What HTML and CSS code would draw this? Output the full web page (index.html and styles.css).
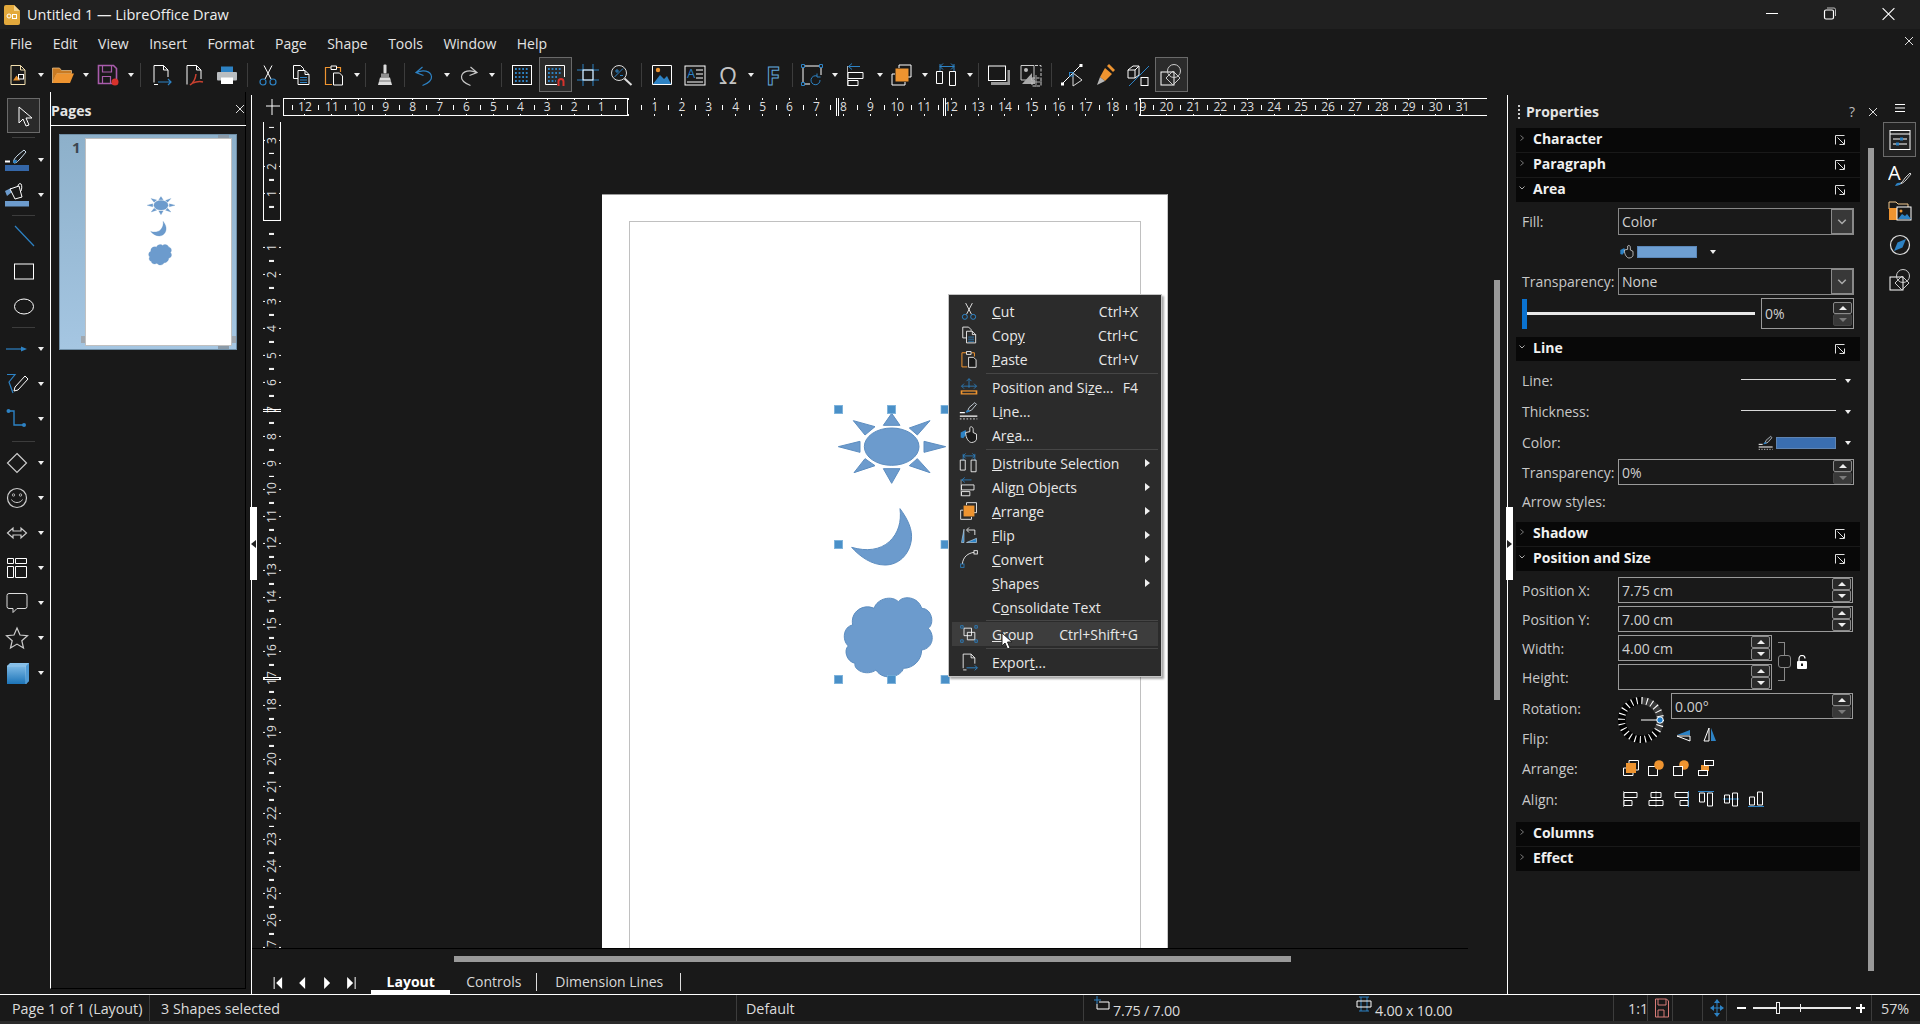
FILE: index.html
```html
<!DOCTYPE html>
<html lang="en">

	<head>
		<meta charset="UTF-8">
		<title>Untitled 1 — LibreOffice Draw</title>
		<link rel="stylesheet" href="styles.css">
	</head>

	<body>
		<svg class="defs" xmlns="http://www.w3.org/2000/svg">
			<defs>
				<linearGradient id="cubeblue" x1="0" y1="0" x2="0" y2="1">
					<stop offset="0" stop-color="#8cc4ec"/>
					<stop offset="1" stop-color="#1c74b8"/>
				</linearGradient>
			</defs>
			<!-- toolbar -->
			<symbol id="new" viewBox="0 0 24 24"><path d="M5 2.5h9.5l4.5 4.5v14.5H5zM14.5 2.5V7H19" fill="none" stroke="#f2dfae"/><path d="M7 17.5l3.5-5 3.5 5z" fill="#e8912d"/><rect x="12.5" y="11.5" width="5" height="4.5" fill="none" stroke="#fff"/></symbol>
			<symbol id="open" viewBox="0 0 24 24"><path d="M1.5 5h7l2 2.5h10v3H6L1.5 20z" fill="#c97a22" stroke="#f0c890" stroke-width=".7"/><path d="M5.5 10.5H23L19 20H1.5z" fill="#ee9430"/></symbol>
			<symbol id="save" viewBox="0 0 24 24"><path d="M2.5 2.5h15l3 3v15h-18z" fill="none" stroke="#a95cab" stroke-width="1.6"/><path d="M6.5 3v6h9V3M6.5 20.5v-7h8v7" fill="none" stroke="#a95cab" stroke-width="1.2"/><circle cx="19" cy="19" r="3.5" fill="#d8322c"/></symbol>
			<symbol id="export" viewBox="0 0 24 24"><path d="M5 19.5V2.5h9.5L19 7v7M14.5 2.5V7H19M5 21.5h4" fill="none" stroke="#fff"/><path d="M9 19h13M19 16l3 3-3 3" fill="none" stroke="#2d82c4" stroke-width="1.2"/></symbol>
			<symbol id="pdf" viewBox="0 0 24 24"><path d="M5 21.5V2.5h9.5L19 7v9M14.5 2.5V7H19" fill="none" stroke="#fff"/><path d="M14 11c-.5 5-3 9-6 11 3-3 9-4 13-3" fill="none" stroke="#c8402f" stroke-width="1.5"/></symbol>
			<symbol id="print" viewBox="0 0 24 24"><path d="M6 3.5h12V10H6z" fill="#2d82c4"/><rect x="2" y="9" width="20" height="8.5" rx="1" fill="#b9bdc0"/><path d="M6 14.5h12V21H6z" fill="#fff"/></symbol>
			<symbol id="cut" viewBox="0 0 24 24"><path d="M9 16L16 2.5M15 16L8 2.5" stroke="#fff" fill="none"/><circle cx="7" cy="19" r="3" fill="none" stroke="#2d82c4" stroke-width="1.2"/><circle cx="17" cy="19" r="3" fill="none" stroke="#2d82c4" stroke-width="1.2"/></symbol>
			<symbol id="copy" viewBox="0 0 24 24"><path d="M9 15.5H4.5v-13h7l3 3V7" fill="none" stroke="#fff"/><path d="M9 7.5h7l4 4v10H9zM16 7.5v4h4" fill="none" stroke="#fff"/><path d="M11 14.5h7M11 17h7M11 19.5h7" stroke="#2d82c4"/></symbol>
			<symbol id="paste" viewBox="0 0 24 24"><path d="M8.5 4.5h-5v17H10M15 4.5h3.5V9" fill="none" stroke="#ee9430" stroke-width="1.2"/><path d="M9 3h5.5v3.5H9z" fill="none" stroke="#fff"/><path d="M11.5 10h6l3 3v9h-9z" fill="#191919" stroke="#fff"/></symbol>
			<symbol id="clone" viewBox="0 0 24 24"><rect x="10.5" y="1.5" width="3" height="9" rx="1" fill="#ddd"/><path d="M8 10.5h8v4H8z" fill="#8e8e8e"/><path d="M7 14.5h10l2 7.5H5z" fill="#dcdcdc"/><path d="M6 18h12" stroke="#777"/></symbol>
			<symbol id="undo" viewBox="0 0 24 24"><path d="M10.5 4L4 9.5l7.5 3M4.5 9.5c6-3 14-2 15 4 .5 4-4 7-9 9" fill="none" stroke="#2d82c4" stroke-width="1.2"/></symbol>
			<symbol id="redo" viewBox="0 0 24 24"><path d="M13.5 4L20 9.5l-7.5 3M19.5 9.5c-6-3-14-2-15 4-.5 4 4 7 9 9" fill="none" stroke="#c8c8c8" stroke-width="1.2"/></symbol>
			<symbol id="grid" viewBox="0 0 24 24"><rect x="2.5" y="2.5" width="19" height="19" fill="none" stroke="#fff"/><path d="M5 6h14M5 10h14M5 14h14M5 18h14" stroke="#2d82c4" stroke-width="1.8" stroke-dasharray="1.8 1.8"/></symbol>
			<symbol id="snap" viewBox="0 0 24 24"><path d="M14 21.5H2.5v-19h19V14" fill="none" stroke="#fff"/><path d="M5 6h14M5 10h14M5 14h9M5 18h8" stroke="#2d82c4" stroke-width="1.8" stroke-dasharray="1.8 1.8"/><path d="M15.5 23v-4.5a2.5 2.5 0 0 1 5 0V23" fill="none" stroke="#d8322c" stroke-width="2"/></symbol>
			<symbol id="help" viewBox="0 0 24 24"><path d="M7 1v22M17 1v22M1 7h22M1 17h22" stroke="#2d82c4"/><rect x="7" y="7" width="10" height="10" fill="none" stroke="#fff"/></symbol>
			<symbol id="zoom" viewBox="0 0 24 24"><circle cx="10" cy="10" r="7.5" fill="none" stroke="#ddd"/><path d="M15.5 15.5L22.5 22" stroke="#ddd" stroke-width="2"/><path d="M5.5 14L14 5.5M6 8h4M8 6v4M11 12.5h3" stroke="#2d82c4"/></symbol>
			<symbol id="image" viewBox="0 0 24 24"><path d="M2.5 2.5h19v19h-19z" fill="none" stroke="#fff"/><path d="M3 21l7-9 4 4 3-3 4 8z" fill="#2d82c4"/><circle cx="8" cy="7" r="2.2" fill="#ee9430"/></symbol>
			<symbol id="transform" viewBox="0 0 24 24"><path d="M3 3h18v9M3 3v18h7" fill="none" stroke="#fff"/><path d="M20 17a4.5 4.5 0 1 1-3-4M17 10.5V14h3.5" fill="none" stroke="#2d82c4"/><path d="M1.5 1.5h3v3h-3zM19.5 1.5h3v3h-3zM1.5 19.5h3v3h-3z" fill="#191919" stroke="#2d82c4"/></symbol>
			<symbol id="align" viewBox="0 0 24 24"><path d="M2.5 3v20" stroke="#aaa"/><path d="M3 3.5h12M7 .5L3.5 3.5 7 6.5" fill="none" stroke="#2d82c4"/><path d="M3 9.5h15v6H3zM3 17.5h10v5H3z" fill="none" stroke="#fff"/></symbol>
			<symbol id="arrange" viewBox="0 0 24 24"><path d="M9 5V2h12v12h-3M15 19v3H2V11h3" fill="none" stroke="#fff"/><rect x="5.5" y="5.5" width="13" height="13" fill="#ee9430"/></symbol>
			<symbol id="distribute" viewBox="0 0 24 24"><path d="M5 3.5h14M8 .5L5 3.5l3 3M16 .5l3 3-3 3" fill="none" stroke="#2d82c4"/><path d="M5 1v8M19 1v8" stroke="#2d82c4"/><path d="M1.5 8.5h6v12h-6zM14.5 8.5h6v14h-6z" fill="none" stroke="#fff"/></symbol>
			<symbol id="shadow" viewBox="0 0 24 24"><path d="M5 20.5h18V7" fill="none" stroke="#9a9a9a" stroke-width="3"/><rect x="2.5" y="3" width="17" height="14.5" fill="#191919" stroke="#fff"/></symbol>
			<symbol id="crop" viewBox="0 0 24 24"><path d="M2 2.5h13V17H2z" fill="none" stroke="#ccc"/><path d="M3 21l10-11v7h3v4z" fill="#a8a8a8"/><circle cx="7" cy="7" r="2" fill="#bbb"/><path d="M16 2.5h6V15M13 15h9v8h-9z" fill="none" stroke="#ccc" stroke-dasharray="3 1.5"/><path d="M17 12v12M11 19h12" stroke="#aaa"/></symbol>
			<symbol id="points" viewBox="0 0 24 24"><path d="M2 21L21 2" stroke="#fff"/><path d="M13 10v13l9-6z" fill="none" stroke="#ddd"/><rect x="9.5" y="9.5" width="3.5" height="3.5" fill="none" stroke="#2d82c4"/><rect x="19.5" y="1" width="3" height="3" fill="#fff"/><rect x="1" y="19.5" width="3" height="3" fill="#fff"/></symbol>
			<symbol id="glue" viewBox="0 0 24 24"><path d="M12 5l7 6-7 7-5-4z" fill="#ee9430"/><path d="M14 3l2-2 6 6-2 2z" fill="#ee9430"/><path d="M7 14l5 4-8 4z" fill="#b8b8b8"/></symbol>
			<symbol id="extrude" viewBox="0 0 24 24"><path d="M2 7l5-4h6v9l-4 3H2zM2 7h7v8M9 7l4-4" fill="none" stroke="#fff"/><path d="M3 23L23 3" stroke="#2d82c4"/><rect x="15" y="14.5" width="7" height="8" fill="none" stroke="#fff"/></symbol>
			<symbol id="shapes" viewBox="0 0 24 24"><rect x="2" y="9" width="13" height="13" fill="none" stroke="#fff"/><path d="M14 8l7 7-7 7-7-7z" fill="none" stroke="#ccc"/><circle cx="15" cy="8" r="6.5" fill="none" stroke="#ccc"/></symbol>
			<!-- left tools -->
			<symbol id="linecolor" viewBox="0 0 24 24"><path d="M0 13.5h5" stroke="#fff" stroke-width="2"/><path d="M9 15c-1-3 1-5 4-8l6-5 2 2-5 6c-3 3-4 5-7 5z" fill="#191919" stroke="#cfe2f2"/><path d="M8 15c0-3 2-4 4-3l-1 3z" fill="#2d82c4"/><rect x="0" y="17" width="24" height="6" fill="#3567a8"/></symbol>
			<symbol id="fillcolor" viewBox="0 0 24 24"><path d="M0 8l6-3 1 4-5 4z" fill="#6c9bcd"/><path d="M5 6l9-3 3 11-7 2z" fill="#191919" stroke="#fff"/><path d="M13 3c0-2 2-3 3-2s1 5 0 7" fill="none" stroke="#fff"/><rect x="0" y="18" width="24" height="5.5" fill="#6c9bcd"/></symbol>
			<symbol id="line" viewBox="0 0 24 24"><path d="M3 2l19 20" stroke="#2d82c4" stroke-width="1.2"/></symbol>
			<symbol id="rect" viewBox="0 0 24 24"><rect x="2.5" y="5" width="19" height="15" fill="none" stroke="#fff"/></symbol>
			<symbol id="ellipse" viewBox="0 0 24 24"><ellipse cx="12" cy="12.5" rx="9.5" ry="7.5" fill="none" stroke="#fff"/></symbol>
			<symbol id="arrow" viewBox="0 0 24 24"><path d="M1 12h16" stroke="#2d82c4" stroke-width="1.2"/><path d="M16 9.5l6 2.5-6 2.5z" fill="#2d82c4"/></symbol>
			<symbol id="curve" viewBox="0 0 24 24"><path d="M2 2.5h8L4 10l4 11" fill="none" stroke="#2d82c4" stroke-width="1.2"/><path d="M9 19l1-4L20 4l3 3-10 11z" fill="#191919" stroke="#fff"/></symbol>
			<symbol id="connector" viewBox="0 0 24 24"><path d="M4 4h5v14h10" fill="none" stroke="#2d82c4" stroke-width="1.4"/><circle cx="3.5" cy="4" r="2" fill="#2d82c4"/><circle cx="19" cy="18" r="2" fill="#2d82c4"/></symbol>
			<symbol id="diamond" viewBox="0 0 24 24"><path d="M12 2.5l9.5 9.5-9.5 9.5L2.5 12z" fill="none" stroke="#ccc" stroke-width="1.2"/></symbol>
			<symbol id="smile" viewBox="0 0 24 24"><circle cx="12" cy="12" r="9.5" fill="none" stroke="#ccc" stroke-width="1.2"/><circle cx="8.5" cy="9" r="1.2" fill="none" stroke="#ccc" stroke-width=".8"/><circle cx="15.5" cy="9" r="1.2" fill="none" stroke="#ccc" stroke-width=".8"/><path d="M6.5 13.5c2 4 9 4 11 0" fill="none" stroke="#ccc"/></symbol>
			<symbol id="dblarrow" viewBox="0 0 24 24"><path d="M2.5 12L8 7v3h8V7l5.5 5-5.5 5v-3H8v3z" fill="none" stroke="#ccc" stroke-width="1.2"/></symbol>
			<symbol id="flow" viewBox="0 0 24 24"><path d="M2.5 2.5h6v5h-6zM10.5 2.5h11v5h-11zM2.5 10.5h6v11h-6zM10.5 10.5h11v11h-11z" fill="none" stroke="#fff"/></symbol>
			<symbol id="callout" viewBox="0 0 24 24"><path d="M4 2.5h16a2 2 0 0 1 2 2v11a2 2 0 0 1-2 2h-8l-4 4v-4H4a2 2 0 0 1-2-2v-11a2 2 0 0 1 2-2z" fill="none" stroke="#ddd"/></symbol>
			<symbol id="star" viewBox="0 0 24 24"><path d="M12 2l3 7 7.5.7-5.7 5 1.7 7.3-6.5-3.9L5.5 22l1.7-7.3-5.7-5L9 9z" fill="none" stroke="#ccc" stroke-width="1.2"/></symbol>
			<symbol id="cube" viewBox="0 0 24 24"><path d="M2 5l3-3h19v18l-3 3H2z" fill="url(#cubeblue)"/><path d="M2 5h19v18" fill="none" stroke="#a5d0ef" stroke-width=".6"/><path d="M21 5l3-3v18l-3 3z" fill="#4f9ad4"/></symbol>
			<!-- deck -->
			<symbol id="deckprops" viewBox="0 0 24 24"><rect x="2" y="2.5" width="20" height="19" fill="none" stroke="#fff"/><path d="M2 6h20M5 11h14M5 16h14" stroke="#fff"/><rect x="12" y="9.5" width="3" height="3" fill="#2d82c4"/><rect x="8" y="14.5" width="3" height="3" fill="#2d82c4"/></symbol>
			<symbol id="deckgal" viewBox="0 0 24 24"><path d="M1 4h7l2 2h10v5H1z" fill="#191919" stroke="#f0c890"/><path d="M1 10h12v12H1z" fill="#ee9430"/><rect x="9" y="9" width="14" height="13" fill="#191919" stroke="#fff"/><path d="M10 21l4-5 3 2 2-2 4 5z" fill="#2d82c4"/><circle cx="13" cy="13" r="1.5" fill="#ee9430"/></symbol>
			<symbol id="decknav" viewBox="0 0 24 24"><circle cx="12" cy="12" r="9.5" fill="none" stroke="#ddd" stroke-width="1.2"/><path d="M18 6l-3.500 8.500L6 18l3.500-8.500z" fill="#2d82c4"/></symbol>
			<!-- small ones -->
			<symbol id="corner" viewBox="0 0 10 10"><path d="M.5 9.5V.5h9M2.5 2.5L9 9M9.5 4.5v5h-5" fill="none" stroke="#e0e0e0"/></symbol>
			<symbol id="chev" viewBox="0 0 8 8"><path d="M2.5 1.5L5.5 4l-3 2.5" fill="none" stroke="#777"/></symbol>
			<symbol id="chevd" viewBox="0 0 8 8"><path d="M1.5 2.5L4 5l2.5-2.5" fill="none" stroke="#aaa"/></symbol>
			<symbol id="area" viewBox="0 0 24 24"><path d="M2 15V9l6-3 1 5-4 5z" fill="#2d82c4"/><path d="M8 9l5-1V3c2-2 4 0 4 2v4l4 2v6c0 2-3 4-6 4-3 0-7-5-7-12z" fill="#191919" stroke="#fff"/></symbol>
			<symbol id="possize" viewBox="0 0 24 24"><path d="M12 2v11M9 5l3-3 3 3M3 11h18M6 8l-3 3 3 3M18 8l3 3-3 3" fill="none" stroke="#2d82c4"/><path d="M2 16h20v5H2z" fill="#ee9430"/><path d="M4 17.5h16v2H4z" fill="#2b2b2b"/></symbol>
			<symbol id="linestyle" viewBox="0 0 24 24"><path d="M10 13l2-5 7-6 2 2-6 7z" fill="#2b2b2b" stroke="#dce8f2"/><path d="M8 14c0-2 2-4 4-3l1 2z" fill="#2d82c4"/><path d="M1 14h6M1 18h21" stroke="#fff" stroke-width="1.5"/><path d="M1 21.5h21" stroke="#fff" stroke-dasharray="2 2"/></symbol>
			<symbol id="flip" viewBox="0 0 24 24"><path d="M3 21l3-16v16zM9 21l12-5v5z" fill="#2d82c4" stroke="#cfe2f2" stroke-width=".7"/><path d="M10 6h9v6M12 3L9 6l3 3" fill="none" stroke="#fff"/></symbol>
			<symbol id="convert" viewBox="0 0 24 24"><path d="M4 18C5 9 11 5 18 4" fill="none" stroke="#fff"/><rect x="2" y="18" width="4" height="4" fill="none" stroke="#2d82c4"/><rect x="18" y="2" width="4" height="4" fill="none" stroke="#fff"/></symbol>
			<symbol id="group" viewBox="0 0 24 24"><path d="M6 5h9v9H6zM10 10h9v9h-9z" fill="none" stroke="#fff"/><path d="M2 2h3v3H2zM19 2h3v3h-3zM2 19h3v3H2zM19 19h3v3h-3z" fill="none" stroke="#2d82c4"/></symbol>
			<symbol id="fliph" viewBox="0 0 16 16"><path d="M1 8l13-5v5z" fill="#2d82c4"/><path d="M1 9l13 5V9z" fill="none" stroke="#fff"/></symbol>
			<symbol id="flipv" viewBox="0 0 16 16"><path d="M7 1L2 14h5z" fill="none" stroke="#fff"/><path d="M9 1l5 13H9z" fill="#2d82c4"/></symbol>
			<symbol id="ar1" viewBox="0 0 16 16"><path d="M6 3V.5h9.5V10H13M3 8H.5v7.5H10V13" fill="none" stroke="#fff"/><rect x="3" y="3" width="10" height="10" fill="#ee9430"/></symbol>
			<symbol id="ar2" viewBox="0 0 16 16"><rect x=".5" y="6.5" width="9" height="9" fill="none" stroke="#fff"/><circle cx="11" cy="5" r="4.8" fill="#ee9430"/></symbol>
			<symbol id="ar3" viewBox="0 0 16 16"><circle cx="11" cy="5" r="4.8" fill="#ee9430"/><rect x=".5" y="6.5" width="9" height="9" fill="#191919" stroke="#fff"/></symbol>
			<symbol id="ar4" viewBox="0 0 16 16"><rect x="3" y="5" width="8" height="6" fill="#ee9430"/><rect x="6.5" y=".5" width="9" height="5" fill="#191919" stroke="#fff"/><rect x=".5" y="10.5" width="9" height="5" fill="#191919" stroke="#fff"/></symbol>
			<symbol id="al1" viewBox="0 0 16 16"><path d="M.5 0v16" stroke="#888"/><path d="M1 1.5h13v5H1zM1 9.5h8v5H1z" fill="none" stroke="#fff"/></symbol>
			<symbol id="al2" viewBox="0 0 16 16"><path d="M8 0v16" stroke="#888"/><path d="M3 1.5h10v5H3zM1 9.5h14v5H1z" fill="none" stroke="#fff"/></symbol>
			<symbol id="al3" viewBox="0 0 16 16"><path d="M15.5 0v16" stroke="#2d82c4"/><path d="M2 1.5h13v5H2zM7 9.5h8v5H7z" fill="none" stroke="#fff"/></symbol>
			<symbol id="al4" viewBox="0 0 16 16"><path d="M0 .5h16" stroke="#2d82c4"/><path d="M1.5 2h5v9h-5zM9.5 2h5v13h-5z" fill="none" stroke="#fff"/></symbol>
			<symbol id="al5" viewBox="0 0 16 16"><path d="M0 8h16" stroke="#2d82c4"/><path d="M1.5 4h5v8h-5zM9.5 2h5v13h-5z" fill="none" stroke="#fff"/></symbol>
			<symbol id="al6" viewBox="0 0 16 16"><path d="M0 15.5h16" stroke="#2d82c4"/><path d="M1.5 6h5v8h-5zM9.5 1h5v13h-5z" fill="none" stroke="#fff"/></symbol>
			<symbol id="lock" viewBox="0 0 12 14"><path d="M3 6V3.5a3 3 0 0 1 6 0" fill="none" stroke="#fff" stroke-width="1.2"/><rect x="1" y="6" width="10" height="8" rx="1" fill="#fff"/><rect x="5" y="8.5" width="2" height="2.5" fill="#191919"/></symbol>
			<symbol id="stpos" viewBox="0 0 16 16"><path d="M3 0v8M0 4h7" stroke="#2d82c4"/><path d="M5 6h10v7H3V8" fill="none" stroke="#fff"/></symbol>
			<symbol id="stsize" viewBox="0 0 16 16"><path d="M3 1h10M3 15h10M5 1v14M11 1v14" stroke="#2d82c4"/><path d="M1 5h14v6H1z" fill="none" stroke="#fff"/></symbol>
			<symbol id="stsave" viewBox="0 0 14 20"><path d="M.5 1h11l2 2v16H.5zM3 1v6h8V1M3 19v-7h6v7" fill="none" stroke="#d87c78"/></symbol>
			<symbol id="stfit" viewBox="0 0 14 18"><path d="M7 0L4 4h6zM7 18l-3-4h6zM0 9l4-3v6zM14 9l-4-3v6z" fill="#2d82c4"/><path d="M7 3v12M3 9h8" stroke="#2d82c4"/></symbol>
			<symbol id="drawing" viewBox="0 0 1140 1260">
				<g fill="#6c9bcd" stroke="#5c8dc0" stroke-width="3">
					<ellipse cx="275" cy="500" rx="82" ry="56"/>
					<path d="M275 400l-25 36h50zM437 500l-65-16v33zM115 500l65-16v33zM275 610l-25-44h50zM390 422l-62 22 24 21zM160 422l65 18-30 25zM162 578l33-42 30 21zM390 578l-38-42-24 21z"/>
					<path d="M300 686C325 720 338 750 334 780C328 825 295 855 255 855C215 855 180 830 155 802C200 815 240 810 268 785C295 760 305 725 300 686Z"/>
					<path d="M158 1035C150 995 190 970 222 985C232 955 275 945 295 965C310 945 355 950 365 985C395 985 405 1030 385 1045C405 1065 400 1105 365 1110C365 1140 340 1165 310 1165C305 1190 250 1205 228 1170C200 1190 160 1170 165 1150C140 1145 130 1110 145 1098C125 1080 130 1040 158 1035Z"/>
				</g>
			</symbol>
		</svg>

		<div class="titlebar">
			<svg class="applogo" viewBox="0 0 16 20"><path d="M2 0h8l6 6v12a2 2 0 0 1-2 2H2a2 2 0 0 1-2-2V2a2 2 0 0 1 2-2z" fill="#e3a93c"/><path d="M10 0l6 6h-6z" fill="#f5d58e"/><circle cx="5" cy="11" r="2" fill="none" stroke="#fff"/><rect x="8.5" y="9.5" width="4" height="4" fill="none" stroke="#fff"/></svg>
			<span class="apptitle">Untitled 1 — LibreOffice Draw</span>
			<div class="winbtns">
				<svg class="winbtn" viewBox="0 0 58 29"><path d="M23 13.5h12" stroke="#fff"/></svg>
				<svg class="winbtn" viewBox="0 0 58 29"><rect x="23.5" y="10" width="9" height="9" rx="1.5" fill="none" stroke="#fff" stroke-width="1.2"/><path d="M26 8h7a1.5 1.5 0 0 1 1.500 1.500V16" fill="none" stroke="#bbb"/></svg>
				<svg class="winbtn" viewBox="0 0 59 29"><path d="M24 8l12 12M36 8L24 20" stroke="#fff" stroke-width="1.1"/></svg>
			</div>
		</div>

		<div class="menubar">
			<span>File</span><span>Edit</span><span>View</span><span>Insert</span><span>Format</span><span>Page</span><span>Shape</span><span>Tools</span><span>Window</span><span>Help</span>
			<svg class="docclose" viewBox="0 0 10 10"><path d="M1 1l8 8M9 1L1 9" stroke="#ddd"/></svg>
		</div>

		<div class="toolbar">
			<div class="tb"><svg class="i"><use href="#new"/></svg></div><div class="dd"></div>
			<div class="tb"><svg class="i"><use href="#open"/></svg></div><div class="dd"></div>
			<div class="tb"><svg class="i"><use href="#save"/></svg></div><div class="dd"></div>
			<div class="sep wide"></div>
			<div class="tb"><svg class="i"><use href="#export"/></svg></div>
			<div class="tb"><svg class="i"><use href="#pdf"/></svg></div>
			<div class="tb"><svg class="i"><use href="#print"/></svg></div>
			<div class="sep wide"></div>
			<div class="tb"><svg class="i"><use href="#cut"/></svg></div>
			<div class="tb"><svg class="i"><use href="#copy"/></svg></div>
			<div class="tb"><svg class="i"><use href="#paste"/></svg></div><div class="dd"></div>
			<div class="sep"></div>
			<div class="tb"><svg class="i"><use href="#clone"/></svg></div>
			<div class="sep"></div>
			<div class="tb"><svg class="i"><use href="#undo"/></svg></div><div class="dd"></div>
			<div class="tb"><svg class="i"><use href="#redo"/></svg></div><div class="dd"></div>
			<div class="sep wide"></div>
			<div class="tb"><svg class="i"><use href="#grid"/></svg></div>
			<div class="tb on"><svg class="i"><use href="#snap"/></svg></div>
			<div class="tb"><svg class="i"><use href="#help"/></svg></div>
			<div class="tb"><svg class="i"><use href="#zoom"/></svg></div>
			<div class="sep wide"></div>
			<div class="tb"><svg class="i"><use href="#image"/></svg></div>
			<div class="tb"><svg class="i" viewBox="0 0 24 24"><rect x="2" y="3" width="20" height="19" fill="none" stroke="#fff"/><text x="4" y="15" font-size="13" fill="#2d82c4" font-family="Open Sans">A</text><path d="M13 7h7M13 11h7M13 15h7M4 19h16" stroke="#fff"/></svg></div>
			<div class="tb omega">Ω</div><div class="dd"></div>
			<div class="tb fontwork">F</div>
			<div class="sep"></div>
			<div class="tb"><svg class="i"><use href="#transform"/></svg></div><div class="dd"></div>
			<div class="tb"><svg class="i"><use href="#align"/></svg></div><div class="dd"></div>
			<div class="tb"><svg class="i"><use href="#arrange"/></svg></div><div class="dd"></div>
			<div class="tb"><svg class="i"><use href="#distribute"/></svg></div><div class="dd"></div>
			<div class="sep"></div>
			<div class="tb"><svg class="i"><use href="#shadow"/></svg></div>
			<div class="tb"><svg class="i"><use href="#crop"/></svg></div>
			<div class="sep wide"></div>
			<div class="tb"><svg class="i"><use href="#points"/></svg></div>
			<div class="tb"><svg class="i"><use href="#glue"/></svg></div>
			<div class="tb"><svg class="i"><use href="#extrude"/></svg></div>
			<div class="tb on"><svg class="i"><use href="#shapes"/></svg></div>
		</div>

		<div class="main">
			<div class="tools">
				<div class="tool-select"><svg class="i"><path d="M7 3l0 16 4-4 3 7 3-1-3-7 6 0z" fill="none" stroke="#fff"/></svg></div>
				<div class="tool-sep first"></div>
				<div class="tool"><svg class="i"><use href="#linecolor"/></svg><div class="dd"></div></div>
				<div class="tool"><svg class="i"><use href="#fillcolor"/></svg><div class="dd"></div></div>
				<div class="tool-sep s6"></div>
				<div class="tool solo"><svg class="i"><use href="#line"/></svg></div>
				<div class="tool solo"><svg class="i"><use href="#rect"/></svg></div>
				<div class="tool solo"><svg class="i"><use href="#ellipse"/></svg></div>
				<div class="tool-sep"></div>
				<div class="tool"><svg class="i"><use href="#arrow"/></svg><div class="dd"></div></div>
				<div class="tool"><svg class="i"><use href="#curve"/></svg><div class="dd"></div></div>
				<div class="tool"><svg class="i"><use href="#connector"/></svg><div class="dd"></div></div>
				<div class="tool-sep s9"></div>
				<div class="tool"><svg class="i"><use href="#diamond"/></svg><div class="dd"></div></div>
				<div class="tool"><svg class="i"><use href="#smile"/></svg><div class="dd"></div></div>
				<div class="tool"><svg class="i"><use href="#dblarrow"/></svg><div class="dd"></div></div>
				<div class="tool"><svg class="i"><use href="#flow"/></svg><div class="dd"></div></div>
				<div class="tool"><svg class="i"><use href="#callout"/></svg><div class="dd"></div></div>
				<div class="tool"><svg class="i"><use href="#star"/></svg><div class="dd"></div></div>
				<div class="tool"><svg class="i"><use href="#cube"/></svg><div class="dd"></div></div>
			</div>

			<div class="pages">
				<div class="pages-head">
					<span>Pages</span>
					<svg class="x10" viewBox="0 0 10 10"><path d="M1 1l8 8M9 1L1 9" stroke="#ddd"/></svg>
				</div>
				<div class="thumb">
					<span class="thumb-num">1</span>
					<div class="thumb-page"><svg class="thumb-shapes"><use href="#drawing"/></svg></div>
				</div>
			</div>

			<div class="split"><div class="grip"><span class="tri-l"></span></div></div>

			<div class="center">
				<div class="ruler-row">
					<svg class="ruler-corner" viewBox="0 0 19 18"><path d="M2 8h14M8 1v16" stroke="#fff"/></svg>
					<div class="hruler">
						<span>12</span><span>11</span><span>10</span><span>9</span><span>8</span><span>7</span><span>6</span><span>5</span><span>4</span><span>3</span><span>2</span><span>1</span><span></span><span>1</span><span>2</span><span>3</span><span>4</span><span>5</span><span>6</span><span>7</span><span>8</span><span>9</span><span>10</span><span>11</span><span>12</span><span>13</span><span>14</span><span>15</span><span>16</span><span>17</span><span>18</span><span>19</span><span>20</span><span>21</span><span>22</span><span>23</span><span>24</span><span>25</span><span>26</span><span>27</span><span>28</span><span>29</span><span>30</span><span>31</span>
						<i class="hbox hbox-l"></i>
						<i class="hbox hbox-r"></i>
						<i class="hmark hmark-a"></i>
						<i class="hmark hmark-b"></i>
					</div>
				</div>

				<div class="work-row">
					<div class="vruler">
						<span>3</span><span>2</span><span>1</span><span></span><span>1</span><span>2</span><span>3</span><span>4</span><span>5</span><span>6</span><span>7</span><span>8</span><span>9</span><span>10</span><span>11</span><span>12</span><span>13</span><span>14</span><span>15</span><span>16</span><span>17</span><span>18</span><span>19</span><span>20</span><span>21</span><span>22</span><span>23</span><span>24</span><span>25</span><span>26</span><span>27</span>
						<i class="vbox"></i>
						<i class="vmark vmark-a"></i>
						<i class="vmark vmark-b"></i>
					</div>
					<div class="work">
						<div class="page">
							<div class="page-margin"></div>
							<svg class="selection" viewBox="0 0 1140 1260">
								<use href="#drawing" width="1140" height="1260"/>
								<g fill="#4a90c8" stroke="#7db3dc" stroke-width="2">
									<rect x="103" y="376" width="25" height="25"/><rect x="262" y="376" width="25" height="25"/><rect x="423" y="376" width="25" height="25"/>
									<rect x="103" y="781" width="25" height="25"/><rect x="423" y="781" width="25" height="25"/>
									<rect x="103" y="1186" width="25" height="25"/><rect x="262" y="1186" width="25" height="25"/><rect x="423" y="1186" width="25" height="25"/>
								</g>
							</svg>
							<div class="ctx">
								<div class="ci"><svg class="ic"><use href="#cut"/></svg><span class="cl"><u>C</u>ut</span><span class="ck">Ctrl+X</span></div>
								<div class="ci"><svg class="ic"><use href="#copy"/></svg><span class="cl">Cop<u>y</u></span><span class="ck">Ctrl+C</span></div>
								<div class="ci"><svg class="ic"><use href="#paste"/></svg><span class="cl"><u>P</u>aste</span><span class="ck">Ctrl+V</span></div>
								<div class="csep"></div>
								<div class="ci"><svg class="ic"><use href="#possize"/></svg><span class="cl">Position and Si<u>z</u>e...</span><span class="ck">F4</span></div>
								<div class="ci"><svg class="ic"><use href="#linestyle"/></svg><span class="cl">L<u>i</u>ne...</span></div>
								<div class="ci"><svg class="ic"><use href="#area"/></svg><span class="cl">Ar<u>e</u>a...</span></div>
								<div class="csep"></div>
								<div class="ci"><svg class="ic"><use href="#distribute"/></svg><span class="cl"><u>D</u>istribute Selection</span><span class="carrow"></span></div>
								<div class="ci"><svg class="ic"><use href="#align"/></svg><span class="cl">Alig<u>n</u> Objects</span><span class="carrow"></span></div>
								<div class="ci"><svg class="ic"><use href="#arrange"/></svg><span class="cl"><u>A</u>rrange</span><span class="carrow"></span></div>
								<div class="ci"><svg class="ic"><use href="#flip"/></svg><span class="cl"><u>F</u>lip</span><span class="carrow"></span></div>
								<div class="ci"><svg class="ic"><use href="#convert"/></svg><span class="cl"><u>C</u>onvert</span><span class="carrow"></span></div>
								<div class="ci"><span class="ic"></span><span class="cl"><u>S</u>hapes</span><span class="carrow"></span></div>
								<div class="ci"><span class="ic"></span><span class="cl">C<u>o</u>nsolidate Text</span></div>
								<div class="csep tight"></div>
								<div class="ci hot"><svg class="ic"><use href="#group"/></svg><span class="cl"><u>G</u>roup</span><span class="ck">Ctrl+Shift+G</span></div>
								<div class="csep"></div>
								<div class="ci"><svg class="ic"><use href="#export"/></svg><span class="cl">Expor<u>t</u>...</span></div>
								<svg class="pointer" viewBox="0 0 12 18"><path d="M1 1v13l3-3 2.5 6 2.5-1-2.5-6H11z" fill="#fff" stroke="#222"/></svg>
							</div>
						</div>
					</div>
					<div class="vscroll"></div>
				</div>

				<div class="hscroll"><div class="hthumb"></div></div>

				<div class="tabs">
					<svg class="nav" viewBox="0 0 24 16"><path d="M8 2v12" stroke="#fff"/><path d="M16 2L10 8l6 6z" fill="#fff"/></svg>
					<svg class="nav" viewBox="0 0 24 16"><path d="M15 2L9 8l6 6z" fill="#fff"/></svg>
					<svg class="nav" viewBox="0 0 24 16"><path d="M9 2l6 6-6 6z" fill="#fff"/></svg>
					<svg class="nav" viewBox="0 0 24 16"><path d="M16 2v12" stroke="#fff"/><path d="M8 2l6 6-6 6z" fill="#fff"/></svg>
					<span class="tab active">Layout</span>
					<span class="tab">Controls</span>
					<span class="tab dim">Dimension Lines</span>
				</div>
			</div>

			<div class="split"><div class="grip"><span class="tri-r"></span></div></div>

			<div class="panel">
				<div class="panel-head">
					<span class="dots"></span>
					<span class="panel-title">Properties</span>
					<span class="q">?</span>
					<svg class="x10" viewBox="0 0 10 10"><path d="M1 1l8 8M9 1L1 9" stroke="#ddd"/></svg>
				</div>
				<div class="panel-row">
					<div class="props">
						<div class="sec"><svg class="chev"><use href="#chev"/></svg><b>Character</b><svg class="corner"><use href="#corner"/></svg></div>
						<div class="sec"><svg class="chev"><use href="#chev"/></svg><b>Paragraph</b><svg class="corner"><use href="#corner"/></svg></div>
						<div class="sec"><svg class="chev"><use href="#chevd"/></svg><b>Area</b><svg class="corner"><use href="#corner"/></svg></div>

						<div class="body area-body">
							<div class="row"><label>Fill:</label><div class="field sel"><span>Color</span><em><svg class="chev"><use href="#chevd"/></svg></em></div></div>
							<div class="row colorrow"><svg class="s16"><use href="#area"/></svg><i class="swatch"></i><div class="dd"></div></div>
							<div class="row"><label>Transparency:</label><div class="field sel"><span>None</span><em><svg class="chev"><use href="#chevd"/></svg></em></div></div>
							<div class="sliderrow">
								<i class="knob"></i><i class="track"></i>
								<div class="field pct"><span>0%</span><div class="spin"><i class="up"></i><i class="down off"></i></div></div>
							</div>
						</div>

						<div class="sec"><svg class="chev"><use href="#chevd"/></svg><b>Line</b><svg class="corner"><use href="#corner"/></svg></div>
						<div class="body line-body">
							<div class="lrow"><label>Line:</label><i class="sample"></i><div class="dd"></div></div>
							<div class="lrow"><label>Thickness:</label><i class="sample"></i><div class="dd"></div></div>
							<div class="lrow"><label>Color:</label><svg class="s16"><use href="#linestyle"/></svg><i class="swatch dark"></i><div class="dd"></div></div>
							<div class="row"><label>Transparency:</label><div class="field spinfield"><span>0%</span><div class="spin"><i class="up"></i><i class="down off"></i></div></div></div>
							<div class="arrowrow"><label>Arrow styles:</label></div>
						</div>

						<div class="sec"><svg class="chev"><use href="#chev"/></svg><b>Shadow</b><svg class="corner"><use href="#corner"/></svg></div>
						<div class="sec"><svg class="chev"><use href="#chevd"/></svg><b>Position and Size</b><svg class="corner"><use href="#corner"/></svg></div>
						<div class="body pos-body">
							<div class="row"><label>Position X:</label><div class="field spinfield"><span>7.75 cm</span><div class="spin"><i class="up"></i><i class="down"></i></div></div></div>
							<div class="row"><label>Position Y:</label><div class="field spinfield"><span>7.00 cm</span><div class="spin"><i class="up"></i><i class="down"></i></div></div></div>
							<div class="wh">
								<div class="wh-rows">
									<div class="row"><label>Width:</label><div class="field spinfield short"><span>4.00 cm</span><div class="spin"><i class="up"></i><i class="down"></i></div></div></div>
									<div class="row"><label>Height:</label><div class="field spinfield short"><span></span><div class="spin"><i class="up"></i><i class="down"></i></div></div></div>
								</div>
								<div class="ratio"><i class="br-top"></i><i class="ratio-box"></i><i class="br-bot"></i></div>
								<svg class="lockic"><use href="#lock"/></svg>
							</div>
							<div class="rot">
								<label class="rot-a">Rotation:</label>
								<svg class="dial" viewBox="0 0 46 46">
									<circle cx="23" cy="23" r="23" fill="#000"/>
									<path d="M23 0a23 23 0 0 1 19 36L23 23z" fill="#3a3a3a"/>
									<circle cx="23" cy="23" r="19.5" fill="none" stroke="#fff" stroke-width="7" stroke-dasharray="1.1 4"/>
									<circle cx="23" cy="23" r="15.5" fill="#191919"/>
									<path d="M23 23h19" stroke="#fff"/>
									<circle cx="42" cy="23" r="3.2" fill="#1e7cc8" stroke="#fff"/>
								</svg>
								<div class="field spinfield rotfield"><span>0.00°</span><div class="spin"><i class="up"></i><i class="down off"></i></div></div>
								<label class="rot-b">Flip:</label>
								<div class="flips"><svg class="s16"><use href="#fliph"/></svg><svg class="s16"><use href="#flipv"/></svg></div>
							</div>
							<div class="irow arr"><label>Arrange:</label><svg class="s16"><use href="#ar1"/></svg><svg class="s16"><use href="#ar2"/></svg><svg class="s16"><use href="#ar3"/></svg><svg class="s16"><use href="#ar4"/></svg></div>
							<div class="irow ali"><label>Align:</label><svg class="s16"><use href="#al1"/></svg><svg class="s16"><use href="#al2"/></svg><svg class="s16"><use href="#al3"/></svg><svg class="s16"><use href="#al4"/></svg><svg class="s16"><use href="#al5"/></svg><svg class="s16"><use href="#al6"/></svg></div>
						</div>

						<div class="sec"><svg class="chev"><use href="#chev"/></svg><b>Columns</b></div>
						<div class="sec"><svg class="chev"><use href="#chev"/></svg><b>Effect</b></div>
					</div>
					<div class="sbar"></div>
				</div>
			</div>

			<div class="deck">
				<svg class="burger" viewBox="0 0 12 10"><path d="M1 1.5h10M1 5h10M1 8.5h10" stroke="#fff"/></svg>
				<div class="deckbtn on"><svg class="i"><use href="#deckprops"/></svg></div>
				<div class="deckbtn"><svg class="i" viewBox="0 0 24 24"><text x="0" y="17" font-size="20" fill="#fff" font-family="Open Sans">A</text><path d="M11 21c3-1 4-3 6-6l5-5 1 1-5 6c-2 2-4 4-7 4z" fill="#191919" stroke="#fff" stroke-width=".8"/><path d="M7 23c1-3 3-4 6-3-1 2-3 3-6 3z" fill="#2d82c4"/></svg></div>
				<div class="deckbtn"><svg class="i"><use href="#deckgal"/></svg></div>
				<div class="deckbtn"><svg class="i"><use href="#decknav"/></svg></div>
				<div class="deckbtn"><svg class="i"><use href="#shapes"/></svg></div>
			</div>
		</div>

		<div class="status">
			<span class="st st1">Page 1 of 1 (Layout)</span>
			<span class="st st2">3 Shapes selected</span>
			<span class="st st3">Default</span>
			<span class="st st4"><svg class="s16 raised"><use href="#stpos"/></svg><span class="low">7.75 / 7.00</span></span>
			<span class="st st5"><svg class="s16 raised"><use href="#stsize"/></svg><span class="low">4.00 x 10.00</span></span>
			<span class="st st6">1:1</span>
			<span class="st st7"><svg class="stsave"><use href="#stsave"/></svg></span>
			<span class="st st8"></span>
			<span class="st st9"><svg class="stfit"><use href="#stfit"/></svg></span>
			<span class="st st10">
				<i class="zm minus"></i>
				<span class="zslider"><i class="zthumb"></i><i class="ztick"></i></span>
				<i class="zm plus"></i>
			</span>
			<span class="st st11">57%</span>
		</div>
	</body>

</html>
```
FILE: styles.css
```css
* {
	box-sizing: border-box;
}

html, body {
	margin: 0;
	padding: 0;
}

body {
	width: 1920px;
	height: 1024px;
	overflow: hidden;
	background-color: #191919;
	color: #e4e4e4;
	font-family: "Open Sans", "Noto Sans", sans-serif;
	font-size: 14px;
}

.defs {
	position: absolute;
	width: 0;
	height: 0;
}

.i {
	display: block;
	width: 24px;
	height: 24px;
	flex: none;
}

.s16 {
	display: block;
	width: 16px;
	height: 16px;
	flex: none;
}

/* title bar */
.titlebar {
	height: 29px;
	display: flex;
	align-items: center;
	padding-left: 4px;
	background-color: #202020;
}

.applogo {
	width: 16px;
	height: 20px;
	margin-top: 1px;
}

.apptitle {
	margin-left: 7px;
	font-size: 14.5px;
	color: #eee;
}

.winbtns {
	margin-left: auto;
	margin-right: 3px;
	display: flex;
}

.winbtn {
	width: 58px;
	height: 29px;
}

/* menu bar */
.menubar {
	height: 28px;
	display: flex;
	align-items: center;
	gap: 20.5px;
	padding-left: 10px;
	font-size: 14px;
}

.docclose {
	width: 10px;
	height: 10px;
	margin-left: auto;
	margin-right: 6px;
	margin-top: -4px;
}

/* tool bar */
.toolbar {
	height: 35px;
	display: flex;
	align-items: center;
	padding-left: 1.5px;
}

.tb {
	width: 33px;
	height: 35px;
	flex: none;
	display: flex;
	align-items: center;
	justify-content: center;
}

.tb.on {
	background-color: #2b2b2b;
	border: 1px solid #6a6a6a;
}

.omega {
	font-size: 23px;
	color: #c4c4c4;
}

.fontwork {
	font-size: 25px;
	font-weight: 700;
	color: transparent;
	-webkit-text-stroke: 1px #62a6dc;
}

.dd {
	width: 12px;
	height: 12px;
	flex: none;
	display: flex;
	align-items: center;
	justify-content: center;
}

.dd::after {
	content: "";
	border-left: 3.5px solid transparent;
	border-right: 3.5px solid transparent;
	border-top: 4px solid #eee;
}

.sep {
	width: 6px;
	height: 24px;
	flex: none;
	display: flex;
	justify-content: center;
}

.sep.wide {
	width: 8px;
}

.sep::after {
	content: "";
	width: 1px;
	background-color: #3c3c3c;
}

/* main area */
.main {
	height: 902px;
	display: flex;
}

.tools {
	width: 50px;
	flex: none;
	padding-top: 6px;
}

.tool-select {
	width: 33px;
	height: 35px;
	margin-left: 7px;
	display: flex;
	align-items: center;
	justify-content: center;
	background-color: #2a2a2a;
	border: 1px solid #6a6a6a;
}

.tool {
	height: 35px;
	display: flex;
	align-items: center;
	padding-left: 5px;
}

.tool .dd {
	margin-left: 6px;
}

.tool.solo {
	padding-left: 12px;
}

.tool-sep {
	height: 8px;
	margin-left: 12px;
	width: 23px;
	display: flex;
	align-items: center;
}

.tool-sep::after {
	content: "";
	width: 100%;
	height: 1px;
	background-color: #3c3c3c;
}

.tool-sep.first {
	height: 9.5px;
}

.tool-sep.s6 {
	height: 6px;
}

.tool-sep.s9 {
	height: 9px;
}

/* pages pane */
.pages {
	width: 196px;
	height: 897px;
	flex: none;
	border-left: 1px solid #fff;
	border-right: 1px solid #000;
	border-bottom: 1px solid #000;
}

.pages-head {
	height: 34px;
	margin-left: -1px;
	margin-right: -1px;
	padding: 4px 0 0 1px;
	display: flex;
	align-items: center;
	justify-content: space-between;
	border-bottom: 1px solid #fff;
	font-weight: 700;
	font-size: 14px;
}

.pages-head .x10 {
	margin-right: 1px;
	margin-top: -4px;
}

.x10 {
	width: 10px;
	height: 10px;
	flex: none;
}

.thumb {
	width: 178px;
	height: 216px;
	margin: 8px 0 0 8px;
	padding: 4px 5px 4px 26px;
	display: flex;
	position: relative;
	background:
		linear-gradient(#8a9aa8, #8a9aa8) 158px 0 / 11px 3px no-repeat,
		linear-gradient(#8a9aa8, #8a9aa8) 158px 100% / 11px 3px no-repeat,
		linear-gradient(#a0a8b0, #a0a8b0) 21px 201px / 4px 7px no-repeat,
		linear-gradient(#a0a8b0, #a0a8b0) 100% 201px / 4px 7px no-repeat,
		linear-gradient(#8db0ca, #a5c6e2);
	border: 1px solid #6f8ea6;
}

.thumb-num {
	position: absolute;
	left: 12px;
	top: 2px;
	font-size: 15px;
	font-weight: 700;
	color: #3c4650;
}

.thumb-page {
	flex: 1;
	background-color: #fff;
	box-shadow: 0 0 0 1px #c0c0c0;
	overflow: hidden;
}

.thumb-shapes {
	display: block;
	width: 99px;
	height: 109px;
	margin: 23px 0 0 51px;
}

/* splitters */
.split {
	width: 1px;
	height: 899px;
	flex: none;
	margin-top: 3px;
	margin-left: 5px;
	position: relative;
	background-color: #fff;
}

.center + .split {
	margin-left: 0;
}

.grip {
	position: absolute;
	top: 412px;
	left: -1px;
	width: 7px;
	height: 73px;
	display: flex;
	align-items: center;
	justify-content: center;
	background-color: #fff;
}

.tri-l {
	border-top: 4px solid transparent;
	border-bottom: 4px solid transparent;
	border-right: 5px solid #222;
}

.tri-r {
	border-top: 4px solid transparent;
	border-bottom: 4px solid transparent;
	border-left: 5px solid #222;
}

/* centre column */
.center {
	width: 1255px;
	flex: none;
	overflow: hidden;
}

.ruler-row {
	height: 18px;
	margin-top: 6px;
	padding-left: 12px;
	display: flex;
}

.ruler-corner {
	width: 19px;
	height: 18px;
	flex: none;
}

.hruler {
	width: 1204px;
	height: 18px;
	padding-left: 8.5px;
	display: flex;
	position: relative;
	overflow: hidden;
}

.hruler span {
	width: 26.93px;
	flex: none;
	text-align: center;
	font-size: 12px;
	line-height: 18px;
	color: #dedede;
	background:
		linear-gradient(#fff, #fff) 50% 0 / 1px 2px no-repeat,
		linear-gradient(#fff, #fff) 50% 100% / 1px 2px no-repeat,
		linear-gradient(#fff, #fff) 0 50% / 1px 5px no-repeat;
}

.hbox {
	position: absolute;
	top: 0;
	height: 18px;
	border: 1px solid #fff;
}

.hbox-l {
	left: 0;
	width: 345px;
}

.hbox-r {
	left: 857px;
	right: 0;
	border-right: none;
}

.hmark {
	position: absolute;
	top: 0;
	height: 18px;
	width: 3px;
	border-left: 1px solid #fff;
	border-right: 1px solid #fff;
}

.hmark-a {
	left: 553px;
}

.hmark-b {
	left: 660px;
}

.work-row {
	height: 832px;
	padding-left: 11px;
	display: flex;
}

.vruler {
	width: 18px;
	height: 826px;
	margin-top: 6px;
	padding-top: 4.5px;
	flex: none;
	position: relative;
	overflow: hidden;
}

.vruler span {
	display: block;
	width: 18px;
	height: 26.93px;
	writing-mode: vertical-rl;
	transform: rotate(180deg);
	text-align: center;
	font-size: 12px;
	line-height: 18px;
	color: #dedede;
	background:
		linear-gradient(#fff, #fff) 0 50% / 2px 1px no-repeat,
		linear-gradient(#fff, #fff) 100% 50% / 2px 1px no-repeat,
		linear-gradient(#fff, #fff) 50% 0 / 5px 1px no-repeat,
		linear-gradient(#fff, #fff) 50% 100% / 5px 1px no-repeat;
}

.vbox {
	position: absolute;
	left: 0;
	top: 0;
	width: 18px;
	height: 99px;
	border: 1px solid #fff;
	border-top: none;
}

.vmark {
	position: absolute;
	left: 0;
	width: 18px;
	height: 3px;
	border-top: 1px solid #fff;
	border-bottom: 1px solid #fff;
}

.vmark-a {
	top: 287px;
}

.vmark-b {
	top: 555px;
}

.work {
	width: 1213px;
	height: 832px;
	flex: none;
	padding: 78px 0 0 321px;
}

.vscroll {
	width: 6px;
	height: 420px;
	margin-top: 164px;
	flex: none;
	background-color: #999;
}

.page {
	width: 566px;
	height: 754px;
	padding: 26px 26px 0 27px;
	position: relative;
	background-color: #fff;
	border-top: 1px solid #9a9a9a;
	border-right: 1px solid #c8c8c8;
}

.page-margin {
	height: 100%;
	border: 1px solid #c0c0c0;
	border-bottom: none;
}

.selection {
	position: absolute;
	left: 198px;
	top: 85px;
	width: 380px;
	height: 420px;
}

/* context menu */
.ctx {
	position: absolute;
	left: 346px;
	top: 99px;
	width: 214px;
	height: 383px;
	padding: 4px 3px 0;
	background-color: #2b2b2b;
	border: 1px solid #c4c4c4;
	box-shadow: 2px 2px 2px rgba(0, 0, 0, .35);
	font-size: 14px;
	color: #e8e8e8;
}

.ci {
	height: 24px;
	display: flex;
	align-items: center;
	padding: 0 7px;
}

.ci.hot {
	background-color: #3d3d3d;
}

.ic {
	width: 20px;
	height: 20px;
	flex: none;
	display: block;
}

.cl {
	margin-left: 13px;
	white-space: nowrap;
}

.ck {
	margin-left: auto;
	margin-right: 13px;
	white-space: nowrap;
}

.carrow {
	margin-left: auto;
	margin-right: 1px;
	border-top: 4px solid transparent;
	border-bottom: 4px solid transparent;
	border-left: 5px solid #eee;
}

.csep {
	height: 4px;
	margin-left: 34px;
	display: flex;
	align-items: center;
}

.csep.tight {
	height: 3px;
}

.csep::after {
	content: "";
	width: 100%;
	height: 1px;
	background-color: #464646;
}

.pointer {
	position: absolute;
	left: 52px;
	top: 337px;
	width: 12px;
	height: 18px;
}

/* tabs under the canvas */
.hscroll {
	height: 23px;
	padding: 7px 0 0 202px;
	border-top: 1px solid #000;
	margin-right: 39px;
}

.hthumb {
	width: 837px;
	height: 6px;
	background-color: #999;
}

.tabs {
	height: 23px;
	padding-left: 14px;
	display: flex;
	align-items: center;
	font-size: 14px;
}

.nav {
	width: 24.3px;
	height: 16px;
	flex: none;
}

.tab {
	height: 23px;
	line-height: 22px;
	padding: 0 16px;
	position: relative;
	white-space: nowrap;
	color: #d8d8d8;
}

.tab.active {
	width: 79px;
	margin-left: 8px;
	padding: 0;
	text-align: center;
	font-weight: 700;
	color: #fff;
	border-bottom: 4px solid #fff;
	line-height: 21px;
}

.tab::after {
	content: "";
	position: absolute;
	right: 0;
	top: 2px;
	height: 18px;
	width: 1px;
	background-color: #ddd;
}

.tab.active::after {
	display: none;
}

.tab.dim {
	padding: 0 18px;
}

/* properties */
.panel {
	width: 372px;
	flex: none;
}

.panel-head {
	height: 36px;
	padding: 3px 2px 0 10px;
	display: flex;
	align-items: center;
}

.dots {
	width: 2px;
	height: 14px;
	background: repeating-linear-gradient(#ccc 0 2px, transparent 2px 4px);
}

.panel-title {
	margin-left: 6px;
	font-weight: 700;
	font-size: 14px;
}

.q {
	margin-left: auto;
	margin-right: 11px;
	width: 10px;
	text-align: center;
	color: #bbb;
}

.panel-row {
	height: 866px;
	padding-left: 8px;
	display: flex;
}

.props {
	width: 344px;
	flex: none;
}

.sbar {
	width: 6px;
	height: 823px;
	margin: 20px 0 0 8px;
	flex: none;
	background-color: #999;
}

.sec {
	height: 24px;
	margin-bottom: 1px;
	padding-left: 2px;
	display: flex;
	align-items: center;
	background-color: #080808;
}

.sec b {
	margin-left: 7px;
	padding-bottom: 4px;
	font-size: 14px;
	color: #f0f0f0;
}

.chev {
	width: 8px;
	height: 8px;
	flex: none;
	margin-top: -5px;
}

.corner {
	width: 10px;
	height: 10px;
	margin-left: auto;
	margin-right: 15px;
}

.body {
	color: #c8c8c8;
}

.body label {
	display: block;
	flex: none;
	width: 102px;
	padding-left: 6px;
	white-space: nowrap;
	font-size: 14px;
}

.area-body {
	height: 135px;
	margin-top: -1px;
	padding-top: 6px;
}

.row {
	display: flex;
	align-items: center;
	height: 27px;
}

.field {
	height: 100%;
	display: flex;
	align-items: center;
	padding-left: 3px;
	border: 1px solid #9a9a9a;
	color: #d0d0d0;
	font-size: 14px;
}

.sel {
	width: 236px;
	height: 27px;
	border-color: #888;
}

.sel span {
	flex: 1;
}

.sel em {
	width: 22px;
	height: 25px;
	display: flex;
	align-items: center;
	justify-content: center;
	background-color: #383838;
	border: 1px solid #8a8a8a;
}

.sel em .chev {
	width: 12px;
	height: 12px;
	margin: 0;
}

.colorrow {
	height: 33px;
	padding-left: 102px;
}

.colorrow .s16 {
	margin-left: 1px;
}

.swatch {
	width: 60px;
	height: 12px;
	margin-left: 2px;
	background-color: #6e9fd2;
	border: 1px solid #5b87b8;
}

.colorrow .dd {
	margin-left: 10px;
}

.sliderrow {
	height: 31px;
	margin-top: 3px;
	padding-left: 6px;
	display: flex;
	align-items: center;
}

.knob {
	width: 5px;
	height: 30px;
	flex: none;
	background-color: #0a72d0;
}

.track {
	width: 228px;
	height: 3px;
	flex: none;
	background-color: #e8e8e8;
}

.pct {
	width: 93px;
	margin-left: 6px;
}

.pct span,
.spinfield span {
	flex: 1;
}

.spin {
	width: 19px;
	height: 24px;
	margin-right: 1px;
	flex: none;
	display: flex;
	flex-direction: column;
}

.spin i {
	height: 12px;
	display: flex;
	align-items: center;
	justify-content: center;
	background-color: #2a2a2a;
	border: 1px solid #8a8a8a;
	border-radius: 2px;
}

.spin i::after {
	content: "";
	border-left: 4px solid transparent;
	border-right: 4px solid transparent;
}

.spin .up::after {
	border-bottom: 4px solid #eee;
}

.spin .down::after {
	border-top: 4px solid #eee;
}

.spin .off {
	background-color: #383838;
	border-color: #444;
}

.spin .off::after {
	border-top-color: #7a7a7a;
}

.line-body {
	height: 161px;
	margin-top: -1px;
	padding-top: 4px;
}

.lrow {
	height: 31px;
	padding-right: 6px;
	display: flex;
	align-items: center;
	justify-content: flex-end;
}

.lrow label {
	margin-right: auto;
}

.lrow .dd {
	margin-left: 6px;
}

.sample {
	width: 95px;
	height: 1px;
	margin-top: -3px;
	background-color: #d8d8d8;
}

.lrow .s16 {
	margin-right: 2px;
}

.swatch.dark {
	background-color: #3a6eb0;
	border-color: #5f84b2;
	margin: 0;
}

.spinfield {
	width: 236px;
	height: 26px;
}

.line-body .row {
	height: 26px;
	margin-top: 1px;
}

.pos-body .row {
	height: 26px;
	margin-bottom: 3px;
}

.arrowrow {
	height: 34px;
	padding-bottom: 2px;
	display: flex;
	align-items: center;
}

.pos-body {
	height: 251px;
	margin-top: -1px;
	padding-top: 6px;
}

.pos-body .spinfield {
	width: 235px;
}

.wh {
	display: flex;
}

.pos-body .spinfield.short {
	width: 154px;
}

.ratio {
	width: 13px;
	margin: 7px 0 0 6px;
	display: flex;
	flex-direction: column;
	align-items: flex-start;
}

.br-top,
.br-bot {
	width: 7px;
	height: 13px;
	border-right: 1px solid #888;
	border-top: 1px solid #888;
}

.br-bot {
	border-top: none;
	border-bottom: 1px solid #888;
}

.ratio-box {
	width: 13px;
	height: 13px;
	border: 1px solid #888;
	border-radius: 3px;
}

.lockic {
	width: 12px;
	height: 14px;
	margin: 20px 0 0 5px;
}

.rot {
	height: 61px;
	display: grid;
	grid-template-columns: 102px 53px 1fr;
	grid-template-rows: 30px 31px;
}

.rot-a,
.rot-b {
	align-self: center;
}

.dial {
	grid-column: 2;
	grid-row: 1 / 3;
	width: 46px;
	height: 46px;
	margin-top: 4px;
}

.rotfield {
	grid-column: 3;
	grid-row: 1;
	align-self: start;
}

.pos-body .rotfield {
	width: 182px;
}

.flips {
	grid-column: 3;
	grid-row: 2;
	padding: 4px 0 0 5px;
	display: flex;
	gap: 10px;
}

.irow {
	height: 30px;
	display: flex;
	align-items: center;
}

.irow.arr {
	margin-top: -1px;
	margin-bottom: 1px;
}

.irow .s16 + .s16 {
	margin-left: 9px;
}

.irow svg:first-of-type {
	margin-left: 5px;
}

/* deck */
.deck {
	width: 40px;
	flex: none;
	padding-left: 3px;
}

.burger {
	display: block;
	width: 12px;
	height: 10px;
	margin: 11px 0 9px 11px;
}

.deckbtn {
	width: 33px;
	height: 35px;
	display: flex;
	align-items: center;
	justify-content: center;
}

.deckbtn.on {
	background-color: #222;
	border: 1px solid #6a6a6a;
}

/* status bar */
.status {
	height: 30px;
	display: flex;
	border-top: 1px solid #fff;
	border-bottom: 3px solid #2a2a2a;
	font-size: 14.3px;
	color: #dcdcdc;
}

.st {
	height: 26px;
	flex: none;
	display: flex;
	align-items: center;
	border-right: 1px solid #3c3c3c;
	white-space: nowrap;
}

.st1 { width: 150px; padding-left: 12px; }
.st2 { width: 587px; padding-left: 11px; }
.st3 { width: 347px; padding-left: 9px; }
.st4 { width: 272px; padding-left: 10px; border-right: none; }
.st5 { width: 258px; }
.st6 { width: 34px; padding-left: 14px; }
.st7 { width: 25px; padding-left: 7px; }
.st8 { width: 30px; }
.st9 { width: 24px; padding-left: 7px; }
.st10 { width: 145px; }
.st11 { padding-left: 9px; border-right: none; }

.raised {
	margin-top: -8px;
	margin-right: 3px;
}

.low {
	margin-top: 4px;
	letter-spacing: -.2px;
}

.stsave {
	width: 14px;
	height: 20px;
}

.stfit {
	width: 14px;
	height: 18px;
}

.zm {
	width: 9px;
	height: 9px;
	flex: none;
	margin-left: 10px;
	background: linear-gradient(#fff, #fff) center / 9px 2px no-repeat;
}

.zm.plus {
	margin-left: 5px;
	background:
		linear-gradient(#fff, #fff) center / 9px 2px no-repeat,
		linear-gradient(#fff, #fff) center / 2px 9px no-repeat;
}

.zslider {
	width: 98px;
	height: 2px;
	margin-left: 7px;
	position: relative;
	background-color: #e8e8e8;
}

.zthumb {
	position: absolute;
	left: 23px;
	top: -5px;
	width: 4px;
	height: 12px;
	background-color: #191919;
	border: 1px solid #eee;
}

.ztick {
	position: absolute;
	left: 47px;
	top: -3px;
	width: 1px;
	height: 8px;
	background-color: #eee;
}
```
